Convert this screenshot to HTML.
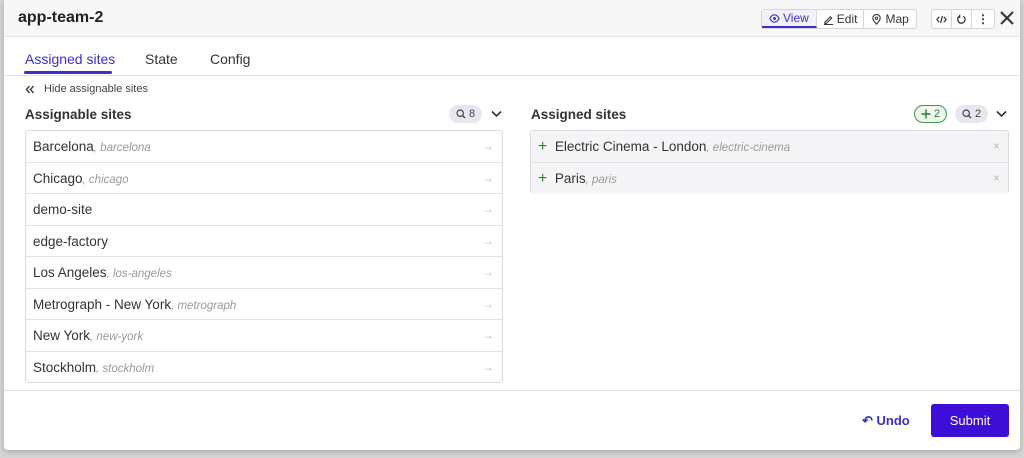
<!DOCTYPE html>
<html><head><style>
*{box-sizing:border-box;margin:0;padding:0}
body{width:1024px;height:458px;background:#d4d4d4;font-family:"Liberation Sans",sans-serif;color:#333;position:relative;overflow:hidden}
.modal{position:absolute;left:4px;top:0;width:1016px;height:450px;background:#fff;border-radius:0 0 4px 4px;box-shadow:0 2px 6px rgba(0,0,0,.2)}
.hdr{height:37px;background:#f7f7f8;border-bottom:1px solid #e3e3e6;position:relative}
.title{position:absolute;left:14px;top:9px;font-size:16px;font-weight:bold;color:#222}
.btng{position:absolute;top:9px;height:20px;border:1px solid #d5d5da;border-radius:3px;display:flex;background:#fff;font-size:12px}
.btng div{padding:0 6px;line-height:18px;border-right:1px solid #d5d5da;display:flex;align-items:center;gap:3px;color:#333}
.btng div:last-child{border-right:none}
.tabs{height:39px;border-bottom:1px solid #e3e3e6;position:relative;font-size:14px}
.tab{position:absolute;top:14px}
.abs{position:absolute}
.list{position:absolute;border:1px solid #dcdce0;border-radius:3px;background:#fff}
.row{height:31.5px;border-bottom:1px solid #e3e3e6;font-size:13.5px;padding-left:7px;line-height:31px;position:relative;color:#333}
.row:last-child{border-bottom:none}
.row i{color:#999;font-size:11.5px}
.row .ar{position:absolute;right:8px;top:0;color:#bbb;font-size:12px}
.pill{position:absolute;height:18px;border-radius:9px;background:#e7e7f0;font-size:11px;line-height:18px;padding:0 7px;color:#444;display:flex;align-items:center;gap:3px}
</style></head><body>
<div class="modal">
<div class="hdr">
<div class="title">app-team-2</div>
<div class="btng" style="left:757px">
<div style="color:#3b2fc9;border-bottom:2px solid #3b2fc9;background:#f1f0fb;padding:0 7px">
<svg width="11" height="11" viewBox="0 0 12 12"><path d="M1 6c1.5-3 3-4 5-4s3.5 1 5 4c-1.5 3-3 4-5 4S2.5 9 1 6z" fill="none" stroke="#3b2fc9" stroke-width="1.3"/><circle cx="6" cy="6" r="1.6" fill="#3b2fc9"/></svg>View</div>
<div><svg width="11" height="11" viewBox="0 0 12 12"><path d="M2 9l6-6 1.5 1.5-6 6H2zM1 11.5h10" fill="none" stroke="#333" stroke-width="1.2"/></svg>Edit</div>
<div style="padding:0 7px"><svg width="11" height="11" viewBox="0 0 12 12"><path d="M6 11C3 8 2 6 2 4.5a4 4 0 018 0C10 6 9 8 6 11z" fill="none" stroke="#333" stroke-width="1.2"/><circle cx="6" cy="4.7" r="1.3" fill="none" stroke="#333"/></svg>Map</div>
</div>
<div class="btng" style="left:927px">
<div style="padding:0 4px"><svg width="11" height="11" viewBox="0 0 12 12"><path d="M3.5 3L1 6l2.5 3M8.5 3L11 6 8.5 9M7 2L5 10" fill="none" stroke="#333" stroke-width="1.3"/></svg></div>
<div style="padding:0 4px"><svg width="11" height="11" viewBox="0 0 12 12"><path d="M4 2.5A4 4 0 108 2.6M4 1v2.5H1.5" fill="none" stroke="#333" stroke-width="1.4"/></svg></div>
<div style="padding:0 5px;font-weight:bold">⋮</div>
</div>
<svg class="abs" style="left:996px;top:11px" width="14" height="14" viewBox="0 0 14 14"><path d="M1 1l12 12M13 1L1 13" stroke="#333" stroke-width="2"/></svg>
</div>
<div class="tabs">
<div class="tab" style="left:21px;color:#3b2fc9">Assigned sites</div>
<div class="abs" style="left:20px;top:34px;width:88px;height:3px;background:#3b2fc9;border-radius:2px"></div>
<div class="tab" style="left:141px">State</div>
<div class="tab" style="left:206px">Config</div>
</div>
<svg class="abs" style="left:21px;top:85px" width="10" height="9" viewBox="0 0 10 9"><path d="M4.5 1L1.5 4.5 4.5 8M8.5 1L5.5 4.5 8.5 8" fill="none" stroke="#444" stroke-width="1.5"/></svg>
<div class="abs" style="left:40px;top:83px;font-size:11px;color:#444">Hide assignable sites</div>
<div class="abs" style="left:21px;top:107px;font-size:13.5px;font-weight:bold;color:#333">Assignable sites</div>
<div class="pill" style="left:445px;top:105px"><svg width="10" height="10" viewBox="0 0 10 10"><circle cx="4.2" cy="4.2" r="3.2" fill="none" stroke="#444" stroke-width="1.2"/><path d="M6.5 6.5L9 9" stroke="#444" stroke-width="1.3"/></svg>8</div>
<svg class="abs" style="left:487px;top:110px" width="11" height="8" viewBox="0 0 11 8"><path d="M1 1.5l4.5 4.5L10 1.5" fill="none" stroke="#333" stroke-width="1.6"/></svg>
<div class="abs" style="left:527px;top:107px;font-size:13.5px;font-weight:bold;color:#333">Assigned sites</div>
<div class="pill" style="left:910px;top:105px;background:#eef7ee;border:1px solid #3a9a4a;color:#2b7a35;padding:0 6px"><svg width="10" height="10" viewBox="0 0 10 10"><path d="M5 0.5v9M0.5 5h9" stroke="#2b7a35" stroke-width="1.4"/></svg>2</div>
<div class="pill" style="left:951px;top:105px"><svg width="10" height="10" viewBox="0 0 10 10"><circle cx="4.2" cy="4.2" r="3.2" fill="none" stroke="#444" stroke-width="1.2"/><path d="M6.5 6.5L9 9" stroke="#444" stroke-width="1.3"/></svg>2</div>
<svg class="abs" style="left:992px;top:110px" width="11" height="8" viewBox="0 0 11 8"><path d="M1 1.5l4.5 4.5L10 1.5" fill="none" stroke="#333" stroke-width="1.6"/></svg>
<div class="list" style="left:21px;top:130px;width:478px;height:253px">
<div class="row">Barcelona<i>, barcelona</i><span class="ar">→</span></div>
<div class="row">Chicago<i>, chicago</i><span class="ar">→</span></div>
<div class="row">demo-site<span class="ar">→</span></div>
<div class="row">edge-factory<span class="ar">→</span></div>
<div class="row">Los Angeles<i>, los-angeles</i><span class="ar">→</span></div>
<div class="row">Metrograph - New York<i>, metrograph</i><span class="ar">→</span></div>
<div class="row">New York<i>, new-york</i><span class="ar">→</span></div>
<div class="row">Stockholm<i>, stockholm</i><span class="ar">→</span></div>
</div>
<div class="list" style="left:526px;top:130px;width:479px;height:64px;background:#f5f5f8">
<div class="row" style="background:#f5f5f8"><span style="color:#2b8a3a;font-size:16px">+</span>&nbsp; Electric Cinema - London<i>, electric-cinema</i><span class="ar">×</span></div>
<div class="row" style="background:#f5f5f8"><span style="color:#2b8a3a;font-size:16px">+</span>&nbsp; Paris<i>, paris</i><span class="ar">×</span></div>
</div>
<div class="abs" style="left:0;top:390px;width:1016px;height:1px;background:#e3e3e6"></div>
<div class="abs" style="left:858px;top:413px;font-size:13px;font-weight:bold;color:#3b2fc9">↶ Undo</div>
<div class="abs" style="left:927px;top:404px;width:78px;height:33px;background:#3d0fd6;border-radius:3px;color:#fff;font-size:13px;text-align:center;line-height:33px">Submit</div>
</div>
</body></html>
